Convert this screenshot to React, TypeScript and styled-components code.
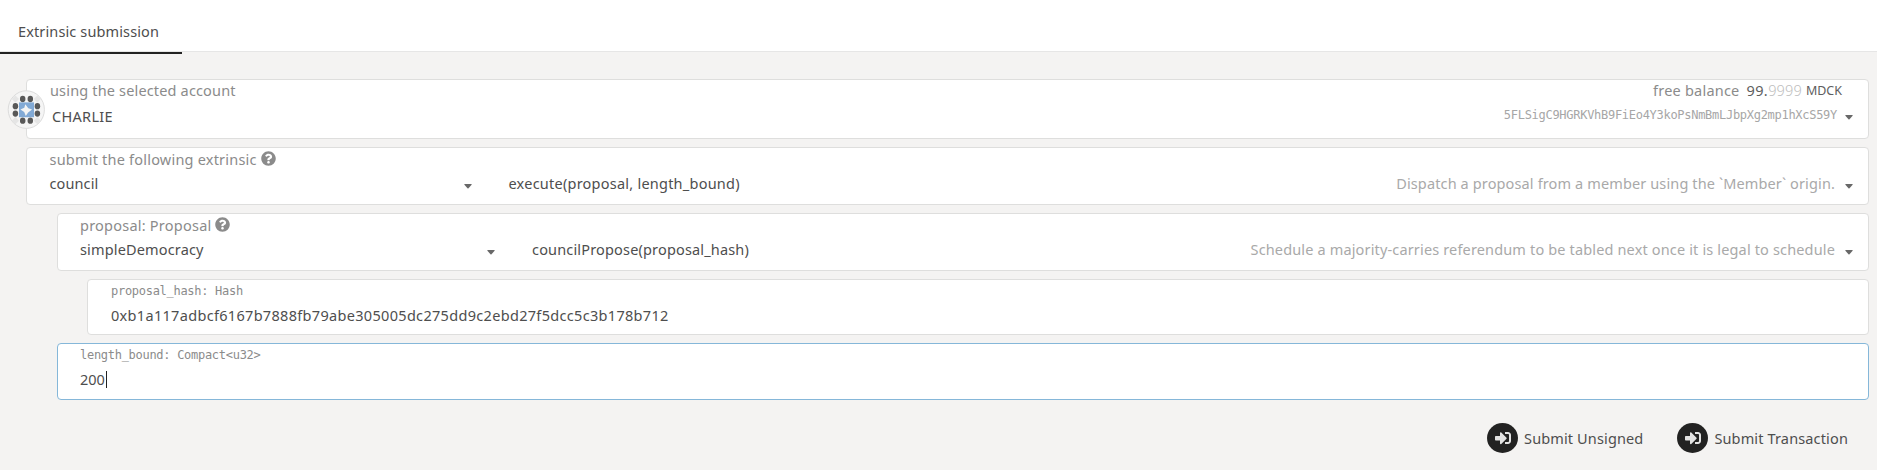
import React from "react";
import styled, { createGlobalStyle } from "styled-components";
import { FaQuestionCircle, FaSignInAlt } from "react-icons/fa";

const GlobalStyle = createGlobalStyle`
  * { box-sizing: border-box; }
  body {
    margin: 0;
    background: #f4f3f2;
    color: #4e4e4e;
    font: 14.5px/20px "Noto Sans", sans-serif;
  }
`;

const Page = styled.main`
  min-height: 470px;
  background: #f4f3f2;
`;

const Tabs = styled.nav`
  display: flex;
  height: 52px;
  background: #fff;
  border-bottom: 1px solid #e6e6e6;
`;

const Tab = styled.div`
  width: 182px;
  height: 54px;
  flex: none;
  padding: 21px 0 0 18px;
  border-bottom: 2px solid #222;
  letter-spacing: 0.126px;
  white-space: nowrap;
`;

const Form = styled.section`
  display: flex;
  flex-direction: column;
  gap: 8px;
  padding: 27px 8px 0 26px;
`;

const Panel = styled.div<{ $height: number; $indent?: number; $top?: number; $left?: number; $focused?: boolean }>`
  position: relative;
  height: ${(p) => p.$height}px;
  margin-left: ${(p) => p.$indent ?? 0}px;
  padding: ${(p) => p.$top ?? 0}px 15px 0 ${(p) => p.$left ?? 23}px;
  background: #fff;
  border: 1px solid ${(p) => (p.$focused ? "#85b7d9" : "#dededd")};
  border-radius: 4px;
`;

const Row = styled.div<{ $gap?: number }>`
  display: flex;
  align-items: flex-start;
  justify-content: space-between;
  height: 20px;
  margin-top: ${(p) => p.$gap ?? 0}px;
`;

const Text = styled.span<{ $ls?: number }>`
  letter-spacing: ${(p) => p.$ls ?? 0}px;
  white-space: pre;
`;

const Label = styled(Text)`
  display: flex;
  color: #8b8b8b;

  svg {
    width: 15px;
    height: 15px;
    margin: 2px 0 0 4px;
  }
`;

const Mono = styled.span`
  padding-top: 1px;
  color: #8b8b8b;
  font: 12px/20px "DejaVu Sans Mono", monospace;
  letter-spacing: -0.284px;
  white-space: pre;
`;

const Address = styled(Mono)`
  padding: 0;
  margin: -1px -2px 0 0;
  color: #a6a6a6;
`;

const AccountName = styled(Text)`
  padding-left: 2px;
`;

const Balance = styled.div`
  display: flex;
  padding-right: 11px;
  color: #5e5e5e;
`;

const Whole = styled(Text)`
  margin-left: 7px;
`;

const Decimals = styled(Text)`
  color: #bcbcbc;
  font-weight: 300;
`;

const Unit = styled.span`
  margin-left: 4px;
  font-size: 12.5px;
  line-height: 22px;
`;

const Pick = styled.div<{ $width?: number }>`
  display: flex;
  justify-content: space-between;
  width: ${(p) => (p.$width ? `${p.$width}px` : "auto")};
  flex: none;
`;

const Method = styled(Text)`
  flex: 1;
  padding-left: 37px;
`;

const Hint = styled(Text)`
  color: #a9a9a9;
`;

const Arrow = styled.svg<{ $top?: number }>`
  display: block;
  width: 8px;
  height: 5px;
  flex: none;
  margin: ${(p) => p.$top ?? 11}px 0 0 10px;
  fill: #686868;
`;

const Identicon = styled.svg`
  position: absolute;
  left: -20px;
  top: 10px;
  width: 38px;
  height: 39px;
`;

const Input = styled.div`
  display: flex;
  height: 20px;
  margin-top: 5px;
`;

const Caret = styled.i`
  width: 1px;
  height: 17px;
  margin: 2px 0 0 1px;
  background: #222;
`;

const Actions = styled.footer`
  display: flex;
  justify-content: flex-end;
  gap: 34px;
  padding: 23px 29px 0 0;
`;

const Action = styled.button`
  display: flex;
  align-items: center;
  gap: 6px;
  padding: 0;
  border: 0;
  background: none;
  color: #4e4e4e;
  font: inherit;
`;

const Disc = styled.span`
  display: flex;
  align-items: center;
  justify-content: center;
  width: 31px;
  height: 30px;
  border-radius: 50%;
  background: #222;
  color: #e3e3e3;

  svg {
    width: 16px;
    height: 16px;
  }
`;

const DownArrow = ({ top }: { top?: number }) => (
  <Arrow $top={top} viewBox="0 0 8 5">
    <path d="M.8 0h6.4q.8 0 .4.7L4.5 4.2q-.5.5-1 0L.4.7Q0 0 .8 0z" />
  </Arrow>
);

const dots = [
  [15.7, 9], [23.3, 9], [8.4, 16.2], [8.4, 23.6],
  [30.4, 16.2], [30.4, 23.6], [15.7, 30.7], [23.3, 30.7],
];
const corners = [[8.4, 9], [30.4, 9], [8.4, 30.7], [30.4, 30.7]];

const AccountIcon = () => (
  <Identicon viewBox="0 0 38 39">
    <ellipse cx="19.3" cy="19.6" rx="18.1" ry="18.8" fill="#f5f5f5" stroke="#dcdcdc" strokeWidth="1" />
    {corners.map(([x, y]) => (
      <path key={`${x}-${y}`} d={`M${x - 3.6} ${y}l3.6-3.6 3.6 3.6-3.6 3.6z`} fill="#e5e5e5" />
    ))}
    {dots.map(([x, y]) => (
      <ellipse key={`${x}-${y}`} cx={x} cy={y} rx="2.75" ry="3.15" fill="#585858" />
    ))}
    <rect x="12" y="12.4" width="15" height="14.8" fill="#82aad6" />
    <path d="M18.3 14.2l3 4 3.8 1.4-4 2.8-2.3 3.6-1.6-4-3.8-2.4 3.9-1.9z" fill="#f4f4f4" />
  </Identicon>
);

export default function App() {
  return (
    <>
      <GlobalStyle />
      <Page>
        <Tabs>
          <Tab>Extrinsic submission</Tab>
        </Tabs>
        <Form>
          <Panel $height={60}>
            <AccountIcon />
            <Row>
              <Label $ls={0.16}>using the selected account</Label>
              <Balance>
                <Label $ls={0.213}>free balance</Label>
                <Whole $ls={0.4}>99.</Whole>
                <Decimals $ls={0.15}>9999</Decimals>
                <Unit>MDCK</Unit>
              </Balance>
            </Row>
            <Row $gap={6}>
              <AccountName $ls={0.299}>CHARLIE</AccountName>
              <Pick>
                <Address>5FLSigC9HGRKVhB9FiEo4Y3koPsNmBmLJbpXg2mp1hXcS59Y</Address>
                <DownArrow top={9} />
              </Pick>
            </Row>
          </Panel>

          <Panel $height={58} $top={1} $left={22.5}>
            <Row>
              <Label $ls={0.209}>submit the following extrinsic<FaQuestionCircle /></Label>
            </Row>
            <Row $gap={4}>
              <Pick $width={422}>
                <Text $ls={0.107}>council</Text>
                <DownArrow />
              </Pick>
              <Method $ls={0.235}>execute(proposal, length_bound)</Method>
              <Hint $ls={0.13}>Dispatch a proposal from a member using the `Member` origin.</Hint>
              <DownArrow />
            </Row>
          </Panel>

          <Panel $height={58} $indent={31} $top={1} $left={22}>
            <Row>
              <Label $ls={0.231}>proposal: Proposal<FaQuestionCircle /></Label>
            </Row>
            <Row $gap={4}>
              <Pick $width={415}>
                <Text $ls={0.15}>simpleDemocracy</Text>
                <DownArrow />
              </Pick>
              <Method $ls={0.166}>councilPropose(proposal_hash)</Method>
              <Hint $ls={0.152}>Schedule a majority-carries referendum to be tabled next once it is legal to schedule</Hint>
              <DownArrow />
            </Row>
          </Panel>

          <Panel $height={56} $indent={61}>
            <Row>
              <Mono>proposal_hash: Hash</Mono>
            </Row>
            <Input>
              <Text $ls={0.315}>0xb1a117adbcf6167b7888fb79abe305005dc275dd9c2ebd27f5dcc5c3b178b712</Text>
            </Input>
          </Panel>

          <Panel $height={57} $indent={31} $left={22} $focused>
            <Row>
              <Mono>{"length_bound: Compact<u32>"}</Mono>
            </Row>
            <Input>
              <Text>200</Text>
              <Caret />
            </Input>
          </Panel>
        </Form>
        <Actions>
          <Action>
            <Disc><FaSignInAlt /></Disc>
            <Text $ls={0.13}>Submit Unsigned</Text>
          </Action>
          <Action>
            <Disc><FaSignInAlt /></Disc>
            <Text $ls={0.144}>Submit Transaction</Text>
          </Action>
        </Actions>
      </Page>
    </>
  );
}
